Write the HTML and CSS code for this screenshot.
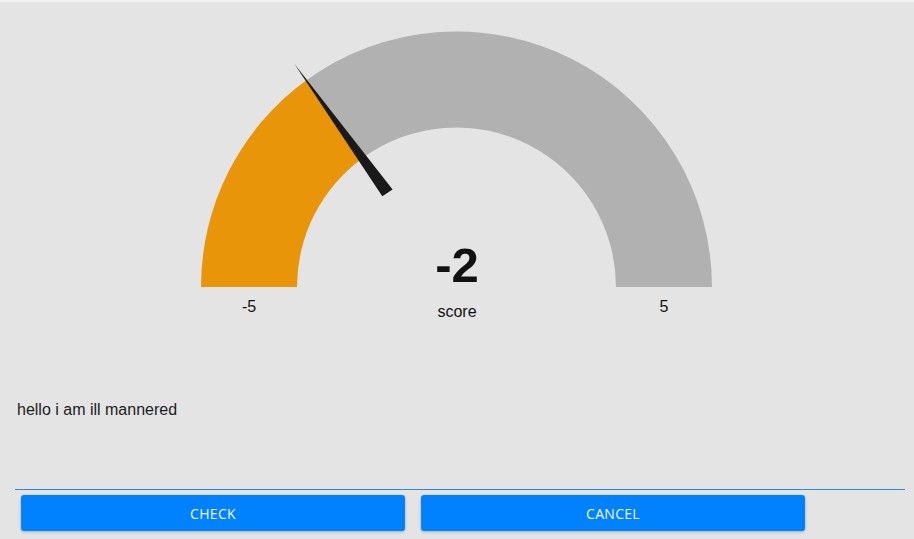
FILE: index.html
```html
<!DOCTYPE html>
<html lang="en">
<head>
<meta charset="utf-8">
<title>Score gauge</title>
<link rel="stylesheet" href="styles.css">
</head>
<body>
<div class="app">
  <svg class="gauge" width="914" height="330" viewBox="0 0 914 330" xmlns="http://www.w3.org/2000/svg">
    <path class="arc-bg" d="M 306.32 78.30 A 255.5 255.5 0 0 1 712 285 L 616 285 A 159.5 159.5 0 0 0 362.75 155.96 Z"/>
    <path class="arc-val" d="M 201 285 A 255.5 255.5 0 0 1 306.32 78.30 L 362.75 155.96 A 159.5 159.5 0 0 0 297 285 Z"/>
    <polygon class="needle" points="294.3,61.7 392.6,187.6 382.3,194.2"/>
    <text class="g-value" x="457" y="280" text-anchor="middle">-2</text>
    <text class="g-label" x="457" y="315" text-anchor="middle">score</text>
    <text class="g-minmax" x="249" y="310" text-anchor="middle">-5</text>
    <text class="g-minmax" x="664" y="310" text-anchor="middle">5</text>
  </svg>
  <div class="field">
    <div class="field-text">hello i am ill mannered</div>
  </div>
  <div class="actions">
    <button class="btn">CHECK</button>
    <button class="btn">CANCEL</button>
  </div>
</div>
</body>
</html>
```
FILE: styles.css
```css
html, body {
  margin: 0;
  padding: 0;
  background: #f1f1f1;
}
.app {
  margin-top: 2px;
  height: 537px;
  background: #e4e4e4;
  font-family: "Liberation Sans", Arial, sans-serif;
  overflow: hidden;
}
.gauge {
  display: block;
}
.arc-bg { fill: #b1b1b1; }
.arc-val { fill: #e8950a; }
.needle { fill: #1a1a1a; }
.g-value {
  font-family: "Liberation Sans", Arial, sans-serif;
  font-weight: bold;
  font-size: 49px;
  fill: #111;
}
.g-label, .g-minmax {
  font-family: "Liberation Sans", Arial, sans-serif;
  font-size: 16px;
  fill: #111;
}
.field {
  margin: 0 9px 0 15px;
  padding: 69px 2px 70px;
  border-bottom: 1px solid #2a8be6;
}
.field-text {
  font-size: 16px;
  line-height: 18px;
  color: #1c1c1c;
}
.actions {
  display: flex;
  gap: 16px;
  padding: 5px 0 0 21px;
}
.btn {
  width: 384px;
  height: 36px;
  border: none;
  border-radius: 3px;
  background: #0082ff;
  color: #f2f8ff;
  font-family: "Open Sans", sans-serif;
  font-size: 14px;
  letter-spacing: 0.3px;
  box-shadow: 0 1px 3px rgba(0,0,0,0.25);
  padding: 0;
}
```
